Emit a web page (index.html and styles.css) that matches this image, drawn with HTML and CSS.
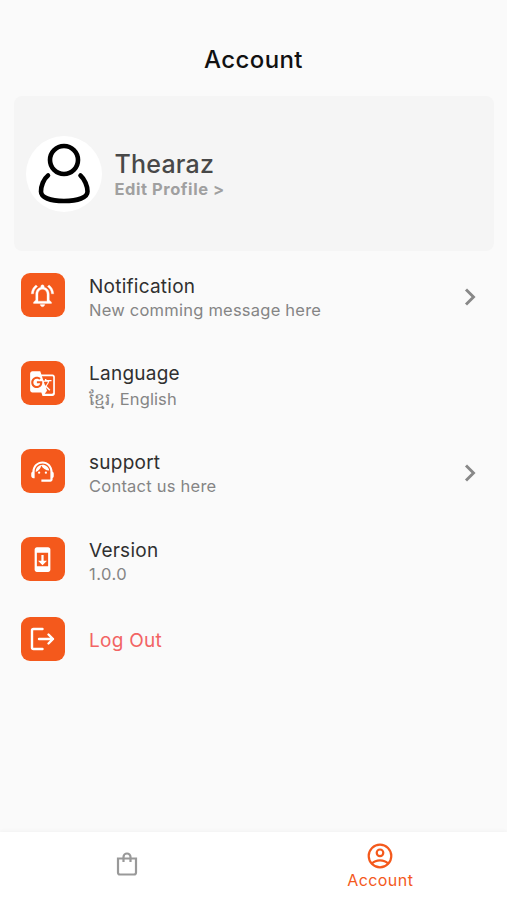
FILE: index.html
```html
<!DOCTYPE html>
<html lang="en">
<head>
<meta charset="utf-8">
<title>Account</title>
<link rel="stylesheet" href="styles.css">
</head>
<body>
<header class="header"><h1 class="title">Account</h1></header>
<main class="main">
  <section class="profile">
    <div class="avatar">
      <svg width="76" height="76" viewBox="0 0 76 76" fill="none" stroke="#000" stroke-width="4.600" stroke-linecap="round"><circle cx="38" cy="24" r="14"/><path d="M22 39.500C17.500 43 15 50 15 55.500C15 61.500 24 65 38 65S61.500 61.500 61.500 55.500C61.500 50 58.500 43 54.500 39.500"/></svg>
    </div>
    <div class="who">
      <div class="name">Thearaz</div>
      <div class="edit">Edit Profile &gt;</div>
    </div>
  </section>
  <ul class="list">
    <li class="row">
      <span class="tile"><svg class="icon bell" viewBox="0 0 24 24"><path d="M12 22c1.100 0 2-.9 2-2h-4c0 1.100.9 2 2 2zm6-6v-5c0-3.070-1.630-5.640-4.500-6.320V4c0-.83-.67-1.500-1.500-1.500s-1.500.67-1.500 1.500v.68C7.640 5.360 6 7.920 6 11v5l-2 2v1h16v-1l-2-2zm-2 1H8v-6c0-2.480 1.510-4.500 4-4.500s4 2.020 4 4.500v6zM7.580 4.080L6.150 2.650C3.750 4.480 2.170 7.300 2.030 10.500h2c.15-2.650 1.510-4.970 3.550-6.420zm12.390 6.420h2c-.15-3.200-1.730-6.020-4.120-7.850l-1.420 1.430c2.020 1.450 3.390 3.770 3.540 6.420z"/></svg></span>
      <div class="text"><div class="label">Notification</div><div class="sub">New comming message here</div></div>
      <svg class="chevron" viewBox="0 0 12 20"><path d="M2 2.500l7.500 7.500L2 17.500"/></svg>
    </li>
    <li class="row language">
      <span class="tile"><svg class="icon" viewBox="0 0 24 24"><path d="M21 4H11l-1-3H3c-1.100 0-2 .9-2 2v15c0 1.100.9 2 2 2h8l1 3h9c1.100 0 2-.9 2-2V6c0-1.100-.9-2-2-2zM7 16c-2.760 0-5-2.240-5-5s2.240-5 5-5c1.350 0 2.480.5 3.350 1.300L9.030 8.570c-.38-.36-1.040-.78-2.030-.78-1.740 0-3.150 1.440-3.150 3.210S5.260 14.210 7 14.210c2.010 0 2.840-1.440 2.920-2.410H7v-1.710h4.680c.07.310.12.610.12 1.020C11.800 13.970 9.890 16 7 16zm6.170-5.580h3.700c-.43 1.250-1.110 2.430-2.050 3.470-.31-.35-.6-.72-.86-1.100l-.79-2.370zm8.330 9.580c0 .55-.45 1-1 1H14l2-2.500-1.040-3.100 3.100 3.100.92-.92-3.300-3.250.02-.02c1.130-1.250 1.930-2.690 2.400-4.220H20v-1.300h-4.530V8h-1.290v1.290h-1.440L11.460 5.500h9.040c.55 0 1 .45 1 1V20z"/></svg></span>
      <div class="text"><div class="label">Language</div><div class="sub"><span class="khmer">ខ្មែរ</span>, English</div></div>
    </li>
    <li class="row">
      <span class="tile"><svg class="icon" viewBox="0 0 24 24"><path d="M21 12.220C21 6.730 16.740 3 12 3c-4.690 0-9 3.650-9 9.280-.6.340-1 .98-1 1.720v2c0 1.100.9 2 2 2h1v-6.100c0-3.870 3.130-7 7-7s7 3.130 7 7V19h-8v2h8c1.100 0 2-.9 2-2v-1.220c.59-.31 1-.92 1-1.640v-2.300c0-.7-.41-1.310-1-1.620z"/><circle cx="9" cy="13" r="1"/><circle cx="15" cy="13" r="1"/><path d="M18 11.030C17.520 8.180 15.040 6 12.050 6c-3.030 0-6.290 2.510-6.030 6.450 2.470-1.010 4.330-3.210 4.860-5.890 1.310 2.630 4 4.440 7.120 4.470z"/></svg></span>
      <div class="text"><div class="label">support</div><div class="sub">Contact us here</div></div>
      <svg class="chevron" viewBox="0 0 12 20"><path d="M2 2.500l7.500 7.500L2 17.500"/></svg>
    </li>
    <li class="row">
      <span class="tile"><svg class="icon phone" viewBox="0 0 24 24"><path d="M17 1.010L7 1c-1.100 0-2 .9-2 2v18c0 1.100.9 2 2 2h10c1.100 0 2-.9 2-2V3c0-1.100-.9-1.990-2-1.990zM17 18H7V6h10v12zM16 13h-3V8h-2v5H8l4 4 4-4z"/></svg></span>
      <div class="text"><div class="label">Version</div><div class="sub version">1.0.0</div></div>
    </li>
    <li class="row logout">
      <span class="tile"><svg class="icon exit" viewBox="0 0 26 26"><path d="M13.500 3H4.500Q3 3 3 4.500V21.500Q3 23 4.500 23H13.500M10 13H24M19.500 8.500l4.500 4.500-4.500 4.500"/></svg></span>
      <div class="text"><div class="label">Log Out</div></div>
    </li>
  </ul>
</main>
<nav class="nav">
  <a class="tab"><svg class="bag" viewBox="0 0 22 26"><path d="M2 7.500h18v14q0 2-2 2h-14q-2 0-2-2zM7.500 11V6a3.500 3.500 0 0 1 7 0v5"/></svg></a>
  <a class="tab active"><svg class="user" viewBox="0 0 26 26"><circle cx="13" cy="13" r="11.300"/><circle cx="13" cy="9.800" r="3.300"/><path d="M5 20.500C7 18.300 10 17.300 13 17.300S19 18.300 21 20.500"/></svg><span class="tab-label">Account</span></a>
</nav>
</body>
</html>
```

FILE: styles.css
```css
* { box-sizing: border-box; }
body {
  margin: 0;
  height: 900px;
  display: flex;
  flex-direction: column;
  background: #fafafa;
  font-family: Inter, "Liberation Sans", sans-serif;
  overflow: hidden;
}
.header { height: 96px; padding-top: 45px; text-align: center; }
.title { margin: 0; font-size: 24px; line-height: 30px; font-weight: 500; letter-spacing: .4px; color: #111; }
.main { flex: 1; }
.profile {
  height: 155px;
  margin: 0 13px 0 14px;
  padding-left: 12px;
  display: flex;
  align-items: center;
  gap: 12.500px;
  background: #f5f5f5;
  border-radius: 8px;
}
.avatar { width: 76px; height: 76px; border-radius: 50%; background: #fff; }
.who { padding-top: 2px; }
.name { font-size: 25px; line-height: 29px; font-weight: 500; color: #484848; letter-spacing: .2px; }
.edit { font-size: 16.500px; line-height: 20px; font-weight: 700; color: #a0a0a0; letter-spacing: .55px; }
.list { list-style: none; margin: 0; padding: 22px 25px 0 20.500px; }
.row { display: flex; height: 88px; align-items: flex-start; }
.row.logout { margin-top: -8px; }
.tile {
  width: 44px;
  height: 44px;
  margin-right: 24.500px;
  padding-right: 1px;
  border-radius: 9px;
  background: #f4591c;
  display: flex;
  align-items: center;
  justify-content: center;
}
.icon { width: 27px; height: 27px; fill: #fff; }
.bell { stroke: #fff; stroke-width: .3; }
.exit { width: 26px; height: 26px; fill: none; stroke: #fff; stroke-width: 2.400; stroke-linecap: round; stroke-linejoin: round; }
.text { flex: 1; }
.label { padding-top: 1px; font-size: 19px; line-height: 25px; color: #303030; letter-spacing: .25px; }
.sub { font-size: 16.500px; line-height: 23px; color: #858585; letter-spacing: .23px; white-space: nowrap; }
.language .label { padding-top: 0; line-height: 26px; }
.language .sub { line-height: 24px; letter-spacing: .1px; }
.version { letter-spacing: .5px; }
.khmer { font-size: 17px; line-height: 1; }
.logout .label { line-height: 45px; color: #f26464; }
.chevron { width: 12px; height: 20px; margin: 14px 6px 0 0; fill: none; stroke: #888; stroke-width: 2.900; }
.nav { height: 68px; display: grid; grid-template-columns: 1fr 1fr; background: #fff; box-shadow: 0 -2px 3px rgba(0, 0, 0, .025); }
.tab { display: flex; flex-direction: column; align-items: center; }
.bag { width: 22px; height: 26px; margin-top: 19px; fill: none; stroke: #999; stroke-width: 2.200; }
.user { width: 26px; height: 26px; margin-top: 11px; fill: none; stroke: #f4591c; stroke-width: 2.200; }
.tab-label { font-size: 16px; line-height: 22px; color: #f4591c; letter-spacing: .45px; }
```
